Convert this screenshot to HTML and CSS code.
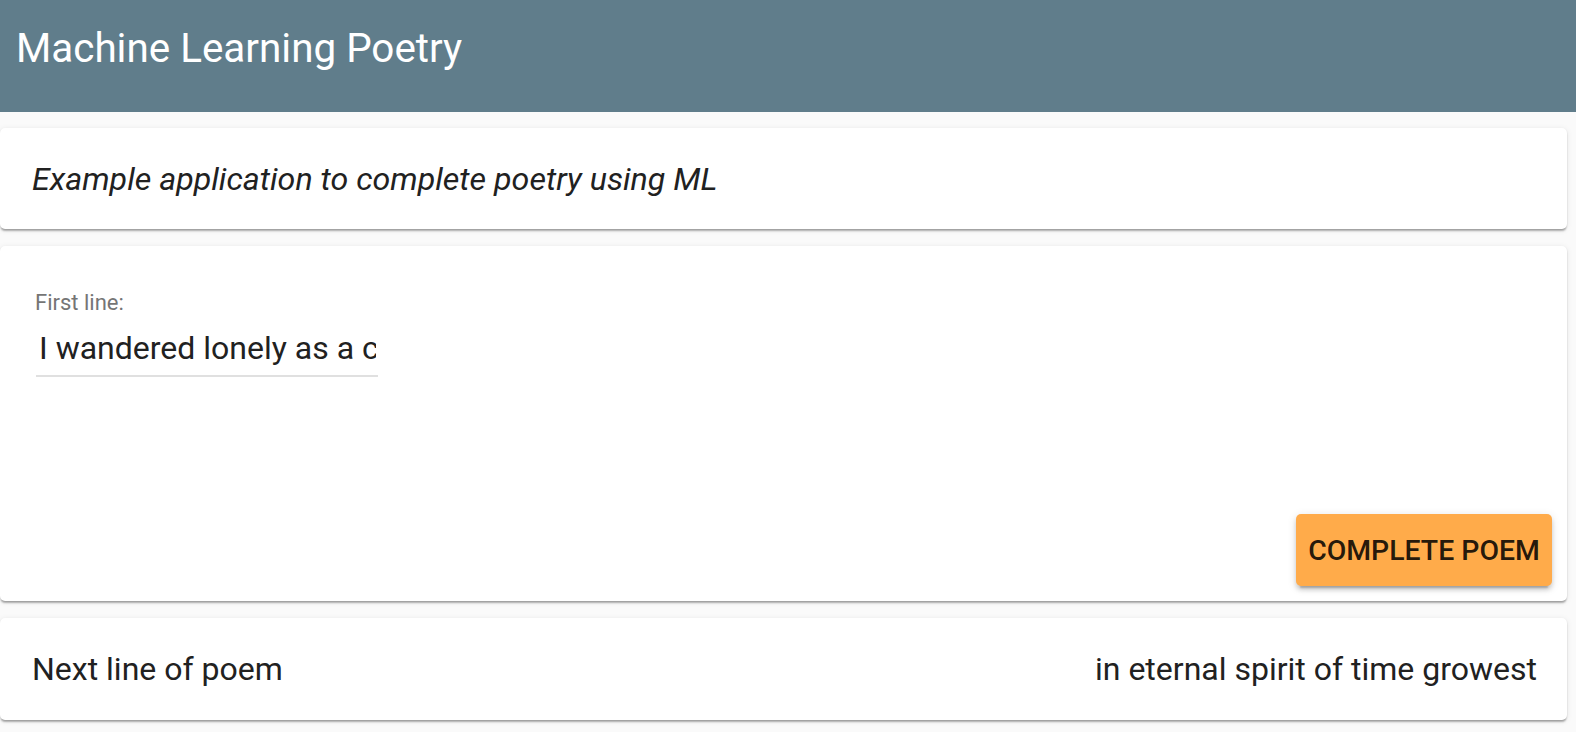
FILE: index.html
```html
<!DOCTYPE html>
<html>
<head>
<meta charset="utf-8">
<link rel="stylesheet" href="styles.css">
</head>
<body>
<header class="toolbar">Machine Learning Poetry</header>
<main class="content">
  <section class="card intro">Example application to complete poetry using ML</section>
  <section class="card form-card">
    <div class="field">
      <label class="field-label" for="first">First line:</label>
      <input id="first" class="field-input" type="text" value="I wandered lonely as a cloud">
    </div>
    <div class="actions">
      <button class="btn">COMPLETE POEM</button>
    </div>
  </section>
  <section class="card result">
    <span>Next line of poem</span>
    <span>in eternal spirit of time growest</span>
  </section>
</main>
</body>
</html>
```
FILE: styles.css
```css
* { box-sizing: border-box; }
html, body { margin: 0; padding: 0; }
body {
  background: #fafafa;
  font-family: Roboto, "Noto Sans", sans-serif;
  color: #212121;
  width: 1576px;
  height: 732px;
  overflow: hidden;
}
.toolbar {
  height: 112px;
  background: #607d8b;
  color: #fff;
  font-size: 40.4px;
  font-weight: 400;
  padding: 25px 16px 0;
  line-height: normal;
}
.content {
  display: flex;
  flex-direction: column;
  gap: 17px;
  padding: 16px 9px 0 0;
}
.card {
  background: #fff;
  border-radius: 5px;
  box-shadow: 0 3px 2px -1px rgba(0,0,0,.25), 0 1px 2px 0 rgba(0,0,0,.14), 0 1px 6px 0 rgba(0,0,0,.08);
}
.intro {
  height: 101px;
  padding: 32px 32px 0;
  font-size: 32.2px;
  font-style: italic;
  line-height: normal;
}
.form-card {
  height: 355px;
  display: flex;
  flex-direction: column;
  padding: 44px 15px 15px 36px;
}
.field {
  width: 342px;
  display: flex;
  flex-direction: column;
  border-bottom: 2px solid #e0e0e0;
}
.field-label {
  font-size: 22px;
  color: #757575;
  line-height: normal;
  margin-left: -1px;
}
.field-input {
  margin-top: 14px;
  border: none;
  outline: none;
  background: transparent;
  font-family: Roboto, "Noto Sans", sans-serif;
  font-size: 32px;
  color: #212121;
  padding: 0 2px 8px 3px;
  line-height: normal;
  width: 100%;
}
.actions {
  margin-top: auto;
  display: flex;
  justify-content: flex-end;
}
.btn {
  width: 256px;
  height: 72px;
  background: #ffab4a;
  border: none;
  border-radius: 5px;
  font-family: Roboto, "Noto Sans", sans-serif;
  font-size: 28.4px;
  font-weight: 500;
  color: rgba(0,0,0,.87);
  box-shadow: 0 6px 2px -4px rgba(0,0,0,.2), 0 4px 4px 0 rgba(0,0,0,.14), 0 2px 10px 0 rgba(0,0,0,.12);
  padding: 0;
}
.result {
  height: 102px;
  display: flex;
  justify-content: space-between;
  align-items: center;
  padding: 0 30px 0 32px;
  font-size: 32px;
}
```
